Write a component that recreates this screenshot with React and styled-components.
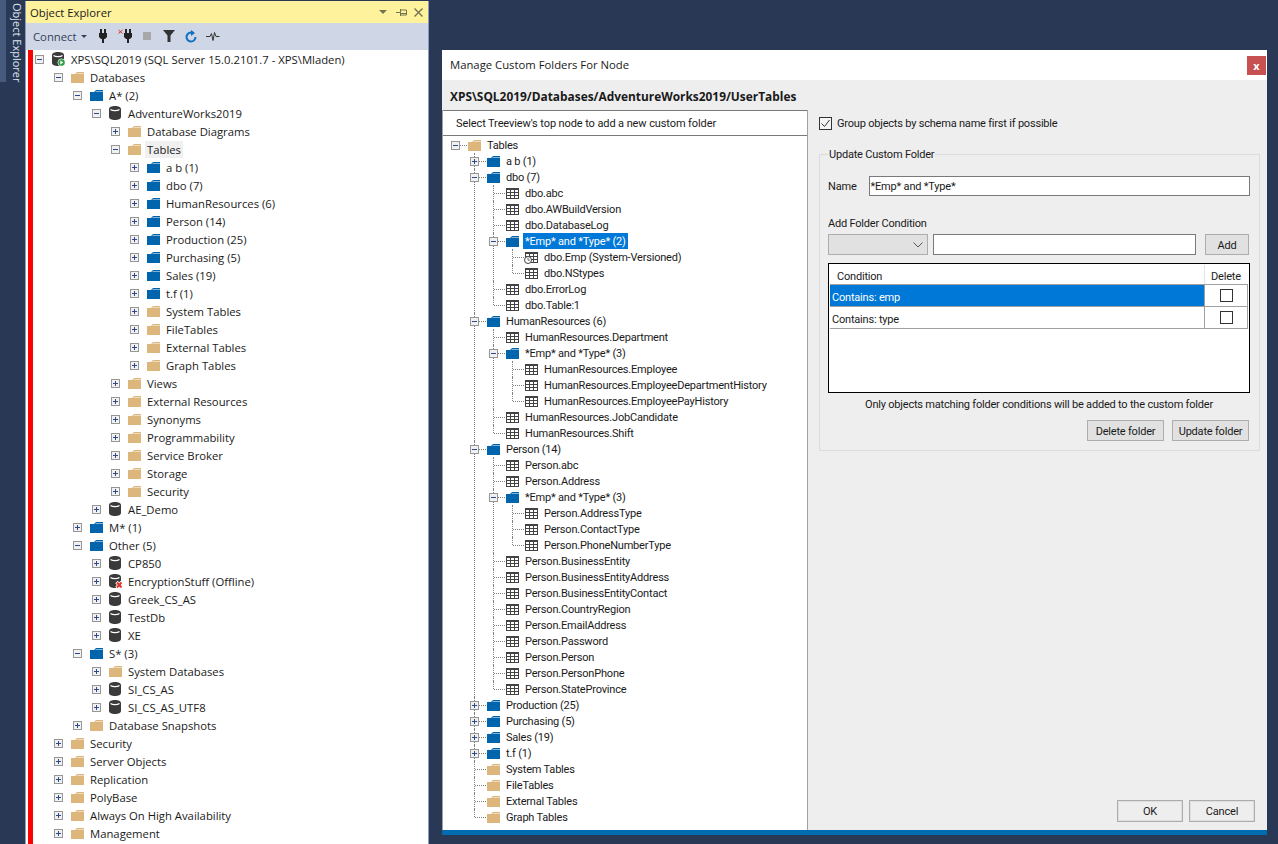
import styled, { createGlobalStyle } from "styled-components";

const GlobalStyle = createGlobalStyle`
  html, body {
    margin: 0;
    height: 844px;
    overflow: hidden;
    background: #293955;
  }
  * {
    box-sizing: border-box;
  }
`;

const Page = styled.div`
  display: flex;
  align-items: flex-start;
  width: 1278px;
  height: 844px;
  overflow: hidden;
  background: #293955;
  font-family: "Open Sans", "Liberation Sans", sans-serif;
  font-size: 11.3px;
  color: #1a1a1a;
`;

/* docked tab on the far left */
const SideDock = styled.div`
  display: flex;
  flex: none;
  width: 25px;
`;

const DockAccent = styled.div`
  width: 6px;
  height: 82px;
  background: #465a7e;
`;

const DockLabel = styled.div`
  writing-mode: vertical-rl;
  width: 19px;
  padding: 3px 0 0 2px;
  font-size: 11px;
  line-height: 15px;
  color: #dfe5f0;
`;

const ExplorerPanel = styled.section`
  flex: none;
  display: flex;
  flex-direction: column;
  width: 404px;
  height: 844px;
  margin-top: 1px;
  border-left: 1px solid #8e9bbc;
  border-right: 1px solid #8e9bbc;
  background: #cfd6e5;
`;

const TitleBar = styled.div`
  display: flex;
  align-items: center;
  height: 22px;
  padding: 0 5px 0 4px;
  background: #fff29d;
  color: #1a1a1a;
`;

const TitleText = styled.span`
  flex: 1;
`;

const TitleTools = styled.div`
  display: flex;
  align-items: center;
  gap: 7px;
`;

const Toolbar = styled.div`
  display: flex;
  align-items: center;
  height: 26px;
  padding-left: 7px;
  color: #33415c;
`;

const ConnectButton = styled.div`
  display: flex;
  align-items: center;
  gap: 4px;
  width: 59px;
`;

const Caret = styled.span`
  width: 0;
  height: 0;
  border-left: 3px solid transparent;
  border-right: 3px solid transparent;
  border-top: 3px solid #33415c;
`;

const ToolButton = styled.div`
  display: flex;
  align-items: center;
  justify-content: center;
  width: 22px;
  height: 22px;
`;

const ExplorerBody = styled.div`
  flex: 1;
  overflow: hidden;
  margin-top: 1px;
  padding-left: 2px;
  background: #fff;
`;

const RedStripe = styled.div`
  display: flex;
  height: 100%;
  border-left: 5px solid #ff0000;
  padding-left: 2px;
`;

/* tree */
const Node = styled.div`
  position: relative;

  ${(p) =>
    p.$vline &&
    `
    &::before {
      content: "";
      position: absolute;
      left: 4px;
      top: 0;
      height: ${p.$last ? `${p.$rowH / 2}px` : "100%"};
      border-left: 1px dotted #808080;
    }
  `}
`;

const Row = styled.div`
  position: relative;
  display: flex;
  align-items: center;
  height: ${(p) => p.$rowH}px;
  white-space: nowrap;

  ${(p) =>
    p.$lines &&
    `
    &::before {
      content: "";
      position: absolute;
      left: 5px;
      width: 11px;
      top: 50%;
      border-top: 1px dotted #808080;
    }
  `}
`;

const Kids = styled.div`
  margin-left: 19px;
`;

const ExpanderSlot = styled.span`
  flex: none;
  width: 17px;
  height: 9px;
`;

const Expander = styled.span`
  position: relative;
  display: block;
  width: 9px;
  height: 9px;
  border: 1px solid #969696;
  background: #f1f1f1;
  z-index: 1;

  &::before {
    content: "";
    position: absolute;
    left: 1px;
    top: 3px;
    width: 5px;
    height: 1px;
    background: #2b4a8c;
  }

  ${(p) =>
    !p.$open &&
    `
    &::after {
      content: "";
      position: absolute;
      left: 3px;
      top: 1px;
      width: 1px;
      height: 5px;
      background: #2b4a8c;
    }
  `}
`;

const IconSlot = styled.span`
  position: relative;
  flex: none;
  display: flex;
  align-items: center;
  justify-content: center;
  width: 13px;
  height: 14px;
  margin-right: 4px;
`;

const NodeLabel = styled.span`
  padding: 0 2px;
  height: ${(p) => p.$rowH - (p.$lines ? 0 : 1)}px;
  line-height: ${(p) => p.$rowH + (p.$lines ? 2 : -1)}px;
  background: ${(p) =>
    p.$selected === "active" ? "#0078d7" : p.$selected ? "#f0f0f0" : "transparent"};
  color: ${(p) => (p.$selected === "active" ? "#fff" : "inherit")};
`;

const FolderIcon = ({ color }) => (
  <svg width="13" height="11" viewBox="0 0 13 11">
    <path d="M0 2h4l2-2h7v11H0z" fill={color} />
    <path d="M5.500 1.500H13" stroke="#fff" strokeOpacity="0.5" />
  </svg>
);

const TableIcon = ({ clock }) => (
  <svg width="13" height="11" viewBox="0 0 13 11" shapeRendering="crispEdges" style={{ overflow: "visible" }}>
    <rect width="13" height="11" fill="#fff" />
    <path
      d="M0 0h13v2H0zM0 0h1v11H0zM4 0h1v11H4zM8 0h1v11H8zM12 0h1v11h-1zM0 4h13v1H0zM0 7h13v1H0zM0 10h13v1H0z"
      fill="#424242"
    />
    {clock && (
      <g shapeRendering="auto">
        <circle cx="3" cy="8" r="3.500" fill="#fff" stroke="#424242" />
        <path d="M3 6v2.200h1.800" fill="none" stroke="#424242" strokeWidth="0.800" />
      </g>
    )}
  </svg>
);

const DbIcon = ({ badge }) => (
  <svg width="13" height="14" viewBox="0 0 13 14">
    <path d="M0 3c0-1.700 2.700-3 6-3s6 1.300 6 3v8c0 1.700-2.700 3-6 3s-6-1.300-6-3z" fill="#3a3a3a" />
    <path d="M1.500 3.500c1 .8 2.700 1.200 4.500 1.200s3.500-.4 4.500-1.200" fill="none" stroke="#fff" strokeWidth="1.200" />
    {badge === "offline" && (
      <g>
        <path d="M7.500 8l5.500 6M13 8l-5.500 6" stroke="#fff" strokeWidth="3.400" />
        <path d="M8 8.500l4.500 5M12.500 8.500l-4.500 5" stroke="#e5352b" strokeWidth="2" />
      </g>
    )}
    {badge === "running" && (
      <g>
        <circle cx="9.500" cy="10.500" r="3.700" fill="#2f9e44" stroke="#fff" strokeWidth="0.600" />
        <path d="M8.300 8.600v3.800l3-1.900z" fill="#fff" />
      </g>
    )}
  </svg>
);

const nodeIcon = (icon) => {
  switch (icon) {
    case "folder":
      return <FolderIcon color="#dcb67a" />;
    case "blue":
      return <FolderIcon color="#0065ad" />;
    case "table":
      return <TableIcon />;
    case "clock":
      return <TableIcon clock />;
    case "db":
      return <DbIcon />;
    case "offline":
      return <DbIcon badge="offline" />;
    case "server":
      return <DbIcon badge="running" />;
    default:
      return null;
  }
};

const TreeNode = ({ node, rowH, lines, last }) => {
  const kids = node.kids || [];
  const hasExpander = kids.length > 0 || node.closed;
  return (
    <Node $vline={lines && !node.root} $last={last} $rowH={rowH}>
      <Row $rowH={rowH} $lines={lines}>
        <ExpanderSlot>{hasExpander && <Expander $open={kids.length > 0} />}</ExpanderSlot>
        <IconSlot>{nodeIcon(node.icon)}</IconSlot>
        <NodeLabel $rowH={rowH} $lines={lines} $selected={node.selected}>
          {node.label}
        </NodeLabel>
      </Row>
      {kids.length > 0 && (
        <Kids>
          {kids.map((k, i) => (
            <TreeNode key={k.label + i} node={k} rowH={rowH} lines={lines} last={i === kids.length - 1} />
          ))}
        </Kids>
      )}
    </Node>
  );
};

const leaf = (icon, label) => ({ icon, label });
const shut = (icon, label) => ({ icon, label, closed: true });

const explorerTree = {
  icon: "server",
  label: "XPS\\SQL2019 (SQL Server 15.0.2101.7 - XPS\\Mladen)",
  kids: [
    {
      icon: "folder",
      label: "Databases",
      kids: [
        {
          icon: "blue",
          label: "A* (2)",
          kids: [
            {
              icon: "db",
              label: "AdventureWorks2019",
              kids: [
                shut("folder", "Database Diagrams"),
                {
                  icon: "folder",
                  label: "Tables",
                  selected: "soft",
                  kids: [
                    shut("blue", "a b (1)"),
                    shut("blue", "dbo (7)"),
                    shut("blue", "HumanResources (6)"),
                    shut("blue", "Person (14)"),
                    shut("blue", "Production (25)"),
                    shut("blue", "Purchasing (5)"),
                    shut("blue", "Sales (19)"),
                    shut("blue", "t.f (1)"),
                    shut("folder", "System Tables"),
                    shut("folder", "FileTables"),
                    shut("folder", "External Tables"),
                    shut("folder", "Graph Tables"),
                  ],
                },
                shut("folder", "Views"),
                shut("folder", "External Resources"),
                shut("folder", "Synonyms"),
                shut("folder", "Programmability"),
                shut("folder", "Service Broker"),
                shut("folder", "Storage"),
                shut("folder", "Security"),
              ],
            },
            shut("db", "AE_Demo"),
          ],
        },
        shut("blue", "M* (1)"),
        {
          icon: "blue",
          label: "Other (5)",
          kids: [
            shut("db", "CP850"),
            shut("offline", "EncryptionStuff (Offline)"),
            shut("db", "Greek_CS_AS"),
            shut("db", "TestDb"),
            shut("db", "XE"),
          ],
        },
        {
          icon: "blue",
          label: "S* (3)",
          kids: [
            shut("folder", "System Databases"),
            shut("db", "SI_CS_AS"),
            shut("db", "SI_CS_AS_UTF8"),
          ],
        },
        shut("folder", "Database Snapshots"),
      ],
    },
    shut("folder", "Security"),
    shut("folder", "Server Objects"),
    shut("folder", "Replication"),
    shut("folder", "PolyBase"),
    shut("folder", "Always On High Availability"),
    shut("folder", "Management"),
  ],
};

const dialogTree = {
  root: true,
  icon: "folder",
  label: "Tables",
  kids: [
    shut("blue", "a b (1)"),
    {
      icon: "blue",
      label: "dbo (7)",
      kids: [
        leaf("table", "dbo.abc"),
        leaf("table", "dbo.AWBuildVersion"),
        leaf("table", "dbo.DatabaseLog"),
        {
          icon: "blue",
          label: "*Emp* and *Type* (2)",
          selected: "active",
          kids: [leaf("clock", "dbo.Emp (System-Versioned)"), leaf("table", "dbo.NStypes")],
        },
        leaf("table", "dbo.ErrorLog"),
        leaf("table", "dbo.Table:1"),
      ],
    },
    {
      icon: "blue",
      label: "HumanResources (6)",
      kids: [
        leaf("table", "HumanResources.Department"),
        {
          icon: "blue",
          label: "*Emp* and *Type* (3)",
          kids: [
            leaf("table", "HumanResources.Employee"),
            leaf("table", "HumanResources.EmployeeDepartmentHistory"),
            leaf("table", "HumanResources.EmployeePayHistory"),
          ],
        },
        leaf("table", "HumanResources.JobCandidate"),
        leaf("table", "HumanResources.Shift"),
      ],
    },
    {
      icon: "blue",
      label: "Person (14)",
      kids: [
        leaf("table", "Person.abc"),
        leaf("table", "Person.Address"),
        {
          icon: "blue",
          label: "*Emp* and *Type* (3)",
          kids: [
            leaf("table", "Person.AddressType"),
            leaf("table", "Person.ContactType"),
            leaf("table", "Person.PhoneNumberType"),
          ],
        },
        leaf("table", "Person.BusinessEntity"),
        leaf("table", "Person.BusinessEntityAddress"),
        leaf("table", "Person.BusinessEntityContact"),
        leaf("table", "Person.CountryRegion"),
        leaf("table", "Person.EmailAddress"),
        leaf("table", "Person.Password"),
        leaf("table", "Person.Person"),
        leaf("table", "Person.PersonPhone"),
        leaf("table", "Person.StateProvince"),
      ],
    },
    shut("blue", "Production (25)"),
    shut("blue", "Purchasing (5)"),
    shut("blue", "Sales (19)"),
    shut("blue", "t.f (1)"),
    leaf("folder", "System Tables"),
    leaf("folder", "FileTables"),
    leaf("folder", "External Tables"),
    leaf("folder", "Graph Tables"),
  ],
};

/* dialog */
const Dialog = styled.section`
  flex: none;
  display: flex;
  flex-direction: column;
  width: 825px;
  height: 785px;
  margin: 50px 0 0 13px;
  background: #eeeeee;
  border-bottom: 5px solid #006cb0;
  color: #1a1a1a;
`;

const DialogTitle = styled.div`
  display: flex;
  align-items: center;
  justify-content: space-between;
  height: 30px;
  padding: 0 1px 1px 8px;
  background: #fff;
`;

const CloseButton = styled.div`
  display: flex;
  align-items: center;
  justify-content: center;
  width: 19px;
  height: 19px;
  margin-top: 1px;
  background: #c75050;
  color: #fff;
  font-size: 11px;
  font-weight: 700;
`;

const PathBar = styled.div`
  height: 30px;
  padding-left: 8px;
  line-height: 32px;
  font-size: 11.9px;
  font-weight: 700;
`;

const DialogBody = styled.div`
  flex: 1;
  display: flex;
  min-height: 0;
  font-family: Roboto, "Liberation Sans", sans-serif;
  font-size: 11px;
  letter-spacing: -0.2px;
`;

const TreeColumn = styled.div`
  flex: none;
  display: flex;
  flex-direction: column;
  width: 366px;
  border-left: 1px solid #a0a0a0;
  border-right: 1px solid #a0a0a0;
`;

const TreeHint = styled.div`
  height: 26px;
  padding-left: 13px;
  line-height: 26px;
  letter-spacing: -0.1px;
  background: #fff;
  border-top: 1px solid #7a7a7a;
  border-bottom: 1px solid #7a7a7a;
`;

const TreeScroll = styled.div`
  flex: 1;
  overflow: hidden;
  padding: 1px 0 0 8px;
  background: #fff;
`;

const SidePanel = styled.div`
  flex: 1;
  display: flex;
  flex-direction: column;
  padding: 6px 7px 8px 11px;
`;

const CheckRow = styled.label`
  display: flex;
  align-items: center;
  gap: 5px;
  height: 14px;
`;

const CheckBox = styled.span`
  display: flex;
  align-items: center;
  justify-content: center;
  flex: none;
  width: 13px;
  height: 13px;
  border: 1px solid #333;
  background: ${(p) => (p.$bare ? "#fff" : "#f6f6f6")};
`;

const GroupBox = styled.fieldset`
  margin: 16px 0 0;
  width: 441px;
  height: 305px;
  padding: 14px 9px 0 8px;
  border: 1px solid #dcdcdc;
`;

const GroupLegend = styled.legend`
  padding: 2px 1px 0;
  margin-left: 0;
  line-height: 14px;
`;

const NameRow = styled.div`
  display: flex;
  align-items: center;
  gap: 12px;
`;

const TextField = styled.div`
  flex: ${(p) => (p.$grow ? 1 : "none")};
  height: ${(p) => p.$h || 20}px;
  padding-left: 1px;
  line-height: ${(p) => (p.$h || 20) - 1}px;
  background: #fff;
  border: 1px solid #7a7a7a;
`;

const FieldLabel = styled.div`
  margin: 21px 0 3px;
  line-height: 14px;
`;

const ConditionRow = styled.div`
  display: flex;
  gap: 5px;
`;

const ComboBox = styled.div`
  display: flex;
  align-items: center;
  justify-content: flex-end;
  width: 100px;
  height: 21px;
  padding-right: 4px;
  background: #e1e1e1;
  border: 1px solid #adadad;
`;

const PushButton = styled.button`
  width: ${(p) => p.$w}px;
  height: ${(p) => p.$h || 21}px;
  margin: 0;
  padding: 1px 0 0;
  background: ${(p) => (p.$dialog ? "#eeeeee" : "#e1e1e1")};
  border: 1px solid #adadad;
  box-shadow: ${(p) => (p.$dialog ? "inset 0 0 0 1px #dedede" : "none")};
  font: inherit;
  letter-spacing: inherit;
  color: inherit;
`;

const AddButton = styled(PushButton)`
  margin: 0 1px 0 4px;
`;

const ConditionGrid = styled.div`
  display: flex;
  flex-direction: column;
  width: 422px;
  height: 130px;
  margin-top: 8px;
  padding: 1px;
  background: #fff;
  border: 1px solid #000;
`;

const GridRow = styled.div`
  display: grid;
  grid-template-columns: 374px 1fr;
  flex: none;
  height: ${(p) => p.$h}px;
  border-bottom: 1px solid #a0a0a0;
`;

const ConditionCell = styled.div`
  padding-left: ${(p) => (p.$head ? 7 : 2)}px;
  line-height: ${(p) => (p.$head ? 24 : 25)}px;
  overflow: hidden;
  background: ${(p) => (p.$active ? "#0078d7" : "#fff")};
  color: ${(p) => (p.$active ? "#fff" : "inherit")};
`;

const DeleteCell = styled.div`
  display: flex;
  align-items: center;
  justify-content: center;
  padding-top: ${(p) => (p.$head ? 4 : 0)}px;
  border-left: 1px solid ${(p) => (p.$head ? "#e4e4e4" : "#a0a0a0")};
  border-right: 1px solid ${(p) => (p.$head ? "#fff" : "#a0a0a0")};
`;

const GridNote = styled.div`
  margin-top: 4px;
  text-align: center;
  line-height: 16px;
`;

const FolderActions = styled.div`
  display: flex;
  justify-content: flex-end;
  gap: 8px;
  width: 421px;
  margin-top: 7px;
`;

const DialogActions = styled.div`
  display: flex;
  justify-content: flex-end;
  gap: 6px;
  margin-top: auto;
  margin-right: 5px;
`;

const PinIcon = styled.svg`
  margin-left: 2px;
`;

const conditions = ["Contains: emp", "Contains: type"];

const Plug = ({ x = 0 }) => (
  <g transform={`translate(${x} 0)`}>
    <path d="M1 0h2v4h2V0h2v4h1v4L6 10H5v4H3v-4H2L0 8V4h1z" fill="#222" />
  </g>
);

export default function App() {
  return (
    <Page>
      <GlobalStyle />
      <SideDock>
        <DockAccent />
        <DockLabel>Object Explorer</DockLabel>
      </SideDock>

      <ExplorerPanel>
        <TitleBar>
          <TitleText>Object Explorer</TitleText>
          <TitleTools>
            <svg width="8" height="4" viewBox="0 0 8 4">
              <path d="M0 0h8L4 4z" fill="#74744f" />
            </svg>
            <PinIcon width="11" height="9" viewBox="0 0 11 9">
              <path d="M0 4.500h4M4.500 1v7M4.500 2h6v5h-6M4.500 5.500h6" fill="none" stroke="#74744f" />
            </PinIcon>
            <svg width="9" height="9" viewBox="0 0 9 9">
              <path d="M0.500 0.500l8 8M8.500 0.500l-8 8" stroke="#74744f" strokeWidth="1.400" />
            </svg>
          </TitleTools>
        </TitleBar>
        <Toolbar>
          <ConnectButton>
            Connect
            <Caret />
          </ConnectButton>
          <ToolButton>
            <svg width="8" height="14" viewBox="0 0 8 14">
              <Plug />
            </svg>
          </ToolButton>
          <ToolButton>
            <svg width="14" height="14" viewBox="0 0 14 14">
              <path d="M0.500 1l4 3.500M4.500 1l-4 3.500" stroke="#d9342b" />
              <Plug x={6} />
            </svg>
          </ToolButton>
          <ToolButton>
            <svg width="8" height="8" viewBox="0 0 8 8">
              <rect width="8" height="8" fill="#a8a8a8" />
            </svg>
          </ToolButton>
          <ToolButton>
            <svg width="12" height="12" viewBox="0 0 12 12">
              <path d="M0 0h12L7.500 5.500V12h-3V5.500z" fill="#333" />
            </svg>
          </ToolButton>
          <ToolButton>
            <svg width="12" height="13" viewBox="0 0 12 13">
              <path d="M7.500 2.800A4.500 4.500 0 1 0 10.500 7" fill="none" stroke="#0e70c0" strokeWidth="2" />
              <path d="M6 0v6l4-3z" fill="#0e70c0" />
            </svg>
          </ToolButton>
          <ToolButton>
            <svg width="14" height="9" viewBox="0 0 14 9">
              <path d="M0 4.500h4l1.500-3 1.500 7 1.500-8 1.500 4h3.500" fill="none" stroke="#333" />
            </svg>
          </ToolButton>
        </Toolbar>
        <ExplorerBody>
          <RedStripe>
            <div>
              <TreeNode node={explorerTree} rowH={18} />
            </div>
          </RedStripe>
        </ExplorerBody>
      </ExplorerPanel>

      <Dialog>
        <DialogTitle>
          Manage Custom Folders For Node
          <CloseButton>x</CloseButton>
        </DialogTitle>
        <PathBar>XPS\SQL2019/Databases/AdventureWorks2019/UserTables</PathBar>
        <DialogBody>
          <TreeColumn>
            <TreeHint>Select Treeview's top node to add a new custom folder</TreeHint>
            <TreeScroll>
              <TreeNode node={dialogTree} rowH={16} lines />
            </TreeScroll>
          </TreeColumn>
          <SidePanel>
            <CheckRow>
              <CheckBox>
                <svg width="11" height="11" viewBox="0 0 11 11">
                  <path d="M1.500 5.500l3 3 5-6.500" fill="none" stroke="#333" />
                </svg>
              </CheckBox>
              Group objects by schema name first if possible
            </CheckRow>
            <GroupBox>
              <GroupLegend>Update Custom Folder</GroupLegend>
              <NameRow>
                Name
                <TextField $grow>*Emp* and *Type*</TextField>
              </NameRow>
              <FieldLabel>Add Folder Condition</FieldLabel>
              <ConditionRow>
                <ComboBox>
                  <svg width="10" height="6" viewBox="0 0 10 6">
                    <path d="M0.500 0.500L5 5l4.500-4.500" fill="none" stroke="#555" />
                  </svg>
                </ComboBox>
                <TextField $grow $h={21} />
                <AddButton $w={44}>Add</AddButton>
              </ConditionRow>
              <ConditionGrid>
                <GridRow $h={20}>
                  <ConditionCell $head>Condition</ConditionCell>
                  <DeleteCell $head>Delete</DeleteCell>
                </GridRow>
                {conditions.map((c, i) => (
                  <GridRow key={c} $h={22}>
                    <ConditionCell $active={i === 0}>{c}</ConditionCell>
                    <DeleteCell>
                      <CheckBox $bare />
                    </DeleteCell>
                  </GridRow>
                ))}
              </ConditionGrid>
              <GridNote>Only objects matching folder conditions will be added to the custom folder</GridNote>
              <FolderActions>
                <PushButton $w={77}>Delete folder</PushButton>
                <PushButton $w={77}>Update folder</PushButton>
              </FolderActions>
            </GroupBox>
            <DialogActions>
              <PushButton $dialog $w={66} $h={22}>
                OK
              </PushButton>
              <PushButton $dialog $w={66} $h={22}>
                Cancel
              </PushButton>
            </DialogActions>
          </SidePanel>
        </DialogBody>
      </Dialog>
    </Page>
  );
}
